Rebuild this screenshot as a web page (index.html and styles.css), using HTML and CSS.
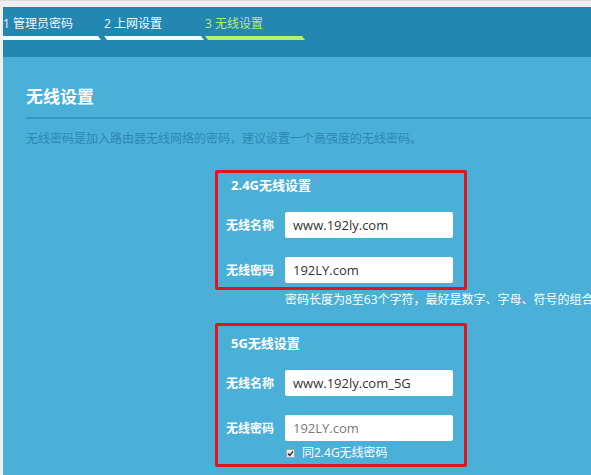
FILE: index.html
```html
<!DOCTYPE html>
<html lang="zh-CN">
<head>
<meta charset="utf-8">
<title>无线设置</title>
<link rel="stylesheet" href="styles.css">
</head>
<body>
<div class="page">
  <nav class="steps">
    <div class="step"><span class="step-label">1 管理员密码</span><span class="step-bar"></span></div>
    <div class="step"><span class="step-label">2 上网设置</span><span class="step-bar"></span></div>
    <div class="step step-active"><span class="step-label">3 无线设置</span><span class="step-bar"></span></div>
  </nav>
  <main class="content">
    <h1 class="title">无线设置</h1>
    <p class="desc">无线密码是加入路由器无线网络的密码，建议设置一个高强度的无线密码。</p>

    <section class="band band-24">
      <h2 class="band-title">2.4G无线设置</h2>
      <div class="field"><span class="field-label">无线名称</span><span class="input">www.192ly.com</span></div>
      <div class="field field-next"><span class="field-label">无线密码</span><span class="input">192LY.com</span></div>
    </section>
    <p class="hint">密码长度为8至63个字符，最好是数字、字母、符号的组合</p>

    <section class="band band-5">
      <h2 class="band-title">5G无线设置</h2>
      <div class="field"><span class="field-label">无线名称</span><span class="input">www.192ly.com_5G</span></div>
      <div class="field field-next"><span class="field-label">无线密码</span><span class="input input-disabled">192LY.com</span></div>
      <div class="check-row">
        <svg class="check" width="9" height="9" viewBox="0 0 9 9"><rect x="0.5" y="0.5" width="8" height="8" rx="1" fill="#ececec" stroke="#9aa4aa"/><path d="M2 4.6 L3.8 6.4 L7 2.4" fill="none" stroke="#333" stroke-width="1.5"/></svg>
        <span class="check-label">同2.4G无线密码</span>
      </div>
    </section>
  </main>
</div>
</body>
</html>
```

FILE: styles.css
```css
* { box-sizing: border-box; }
html, body { margin: 0; height: 100%; }
body {
  background: #efefef;
  border-top: 1px solid #dcdcdc;
  padding: 6px 0 0 3px;
  overflow: hidden;
  font-family: "Open Sans", "Noto Sans CJK SC", sans-serif;
}
.page {
  background: #4bb0d8;
  min-height: 470px;
}
.steps {
  height: 50px;
  background: #2387b1;
  display: flex;
  gap: 1px;
}
.step {
  width: 100px;
  display: flex;
  flex-direction: column;
  padding-top: 8px;
}
.step-label {
  font-size: 12px;
  line-height: 18px;
  color: #f2f8fb;
  white-space: nowrap;
}
.step-bar {
  margin-top: 3px;
  height: 4px;
  background: #f4f9fb;
  clip-path: polygon(0 0, calc(100% - 3px) 0, 100% 100%, 3px 100%);
}
.step:first-child .step-bar { margin-left: -3px; width: 101px; }
.step-active .step-label { color: #bdeb73; }
.step-active .step-bar { background: #bdeb73; }

.content {
  padding: 28px 0 0 23px;
}
.title {
  margin: 0;
  font-size: 17px;
  line-height: 24px;
  font-weight: bold;
  color: #fff;
  padding-bottom: 8px;
  border-bottom: 2px solid #3197c3;
}
.desc {
  margin: 11px 0 0;
  font-size: 12px;
  line-height: 18px;
  color: #2b88b4;
}
.band {
  margin-left: 189px;
  width: 252px;
  border: 3px solid #e3141b;
  border-radius: 2px;
  padding-left: 8px;
}
.band-24 { margin-top: 22px; padding-top: 3px; padding-bottom: 4px; }
.band-5 { margin-top: 14px; padding-top: 8px; padding-bottom: 2px; }
.band-title {
  margin: 0;
  padding-left: 5px;
  font-size: 13px;
  line-height: 18px;
  font-weight: bold;
  color: #fff;
}
.field {
  display: flex;
  align-items: center;
  margin-top: 18px;
}
.field-next { margin-top: 19px; }
.field-label {
  width: 59px;
  font-size: 12px;
  font-weight: bold;
  color: #fff;
  white-space: nowrap;
}
.input {
  width: 168px;
  height: 26px;
  line-height: 26px;
  background: #fff;
  border-radius: 2px;
  padding-left: 8px;
  font-size: 13px;
  color: #333;
  font-family: "Open Sans", "Noto Sans CJK SC", sans-serif;
}
.input-disabled { color: #7a7a7a; }
.hint {
  margin: 1px 0 0 259px;
  font-size: 12px;
  line-height: 18px;
  color: #fff;
  white-space: nowrap;
}
.check-row {
  display: flex;
  align-items: center;
  gap: 7px;
  margin-top: 3px;
  padding-left: 60px;
  height: 18px;
}
.check { display: block; }
.check-label {
  font-size: 12px;
  line-height: 18px;
  color: #fff;
}
```
